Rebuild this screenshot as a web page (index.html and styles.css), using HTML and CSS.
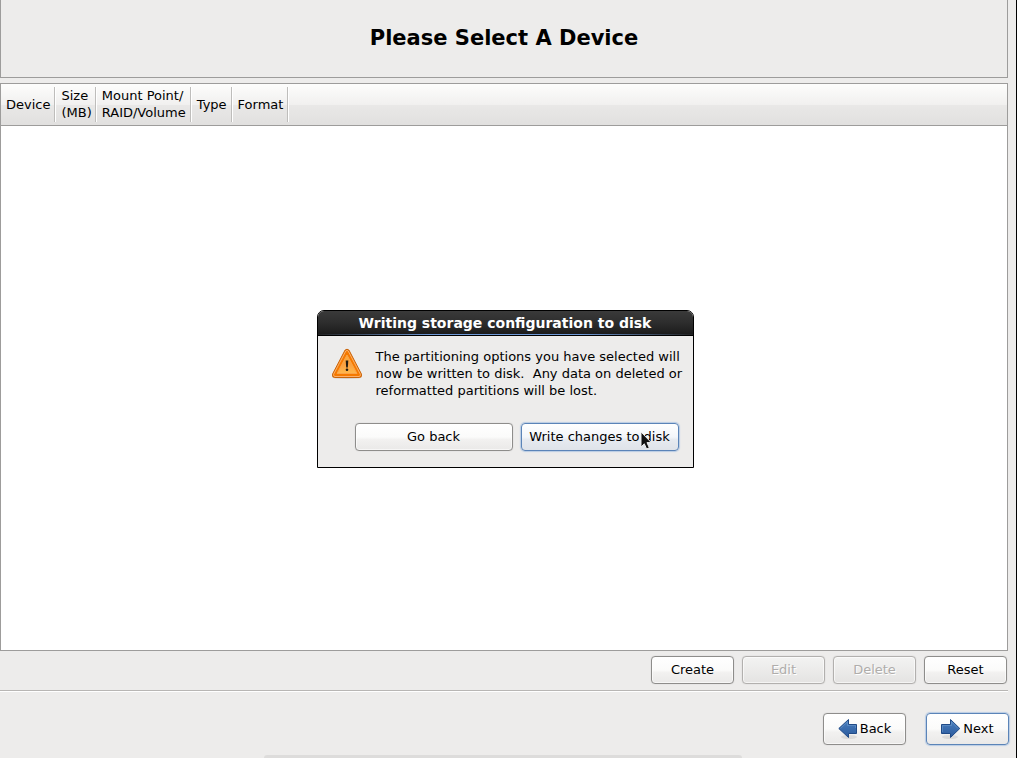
FILE: index.html
```html
<!DOCTYPE html>
<html lang="en">
<head>
<meta charset="utf-8">
<title>Please Select A Device</title>
<link rel="stylesheet" href="styles.css">
</head>
<body>
<div class="screen">
  <main class="content">
    <header class="banner"><h1>Please Select A Device</h1></header>
    <section class="device-list">
      <table class="devices">
        <thead>
          <tr>
            <th scope="col"><span>Device</span></th>
            <th scope="col"><span>Size<br>(MB)</span></th>
            <th scope="col"><span>Mount Point/<br>RAID/Volume</span></th>
            <th scope="col"><span>Type</span></th>
            <th scope="col"><span>Format</span></th>
            <td class="filler"></td>
          </tr>
        </thead>
        <tbody></tbody>
      </table>
    </section>
    <div class="actions">
      <button class="btn" type="button">Create</button>
      <button class="btn" type="button" disabled>Edit</button>
      <button class="btn" type="button" disabled>Delete</button>
      <button class="btn" type="button">Reset</button>
    </div>
  </main>
  <nav class="steps">
    <button class="btn step" type="button">
      <svg class="arrow" viewBox="0 0 20 22" aria-hidden="true"><defs><linearGradient id="blue" x1="0" y1="0" x2="0" y2="1"><stop offset="0" stop-color="#4a80c0"/><stop offset="1" stop-color="#2c5a9c"/></linearGradient></defs><ellipse cx="11" cy="20" rx="8" ry="2" fill="#000" opacity=".08"/><path d="M.8 11.500 10.500 2.500V7.500H18.500V16.500H10.500V20.500Z" fill="url(#blue)" stroke="#204a87"/><path d="M2.500 11.500 9.500 4.800V8.500H17.500V11" fill="none" stroke="#729fcf" stroke-opacity=".5"/></svg>
      <span>Back</span>
    </button>
    <button class="btn step focus" type="button">
      <svg class="arrow" viewBox="0 0 20 22" aria-hidden="true"><ellipse cx="9" cy="20" rx="8" ry="2" fill="#000" opacity=".08"/><path d="M18.800 11.500 9.500 2.500V7.500H.5V16.500H9.500V20.500Z" fill="url(#blue)" stroke="#204a87"/><path d="M1.500 15V8.500H10.500V4.800L17 11.500" fill="none" stroke="#729fcf" stroke-opacity=".5"/></svg>
      <span>Next</span>
    </button>
  </nav>
  <div class="shelf"></div>
  <section class="dialog" role="dialog" aria-labelledby="dialog-title">
    <h2 class="dialog-title" id="dialog-title">Writing storage configuration to disk</h2>
    <div class="dialog-body">
      <div class="message">
        <svg class="warning" viewBox="0 0 32 32" aria-hidden="true"><defs><linearGradient id="amber" x1="0" y1="0" x2="0" y2="1"><stop offset="0" stop-color="#fcaf3e"/><stop offset=".5" stop-color="#f9a040"/><stop offset="1" stop-color="#ffb84d"/></linearGradient></defs><ellipse cx="16" cy="29.500" rx="15" ry="1.500" fill="#000" opacity=".12"/><path d="M14 2.200Q16 .2 18 2.200L30.400 26Q31.300 29.200 28.500 29.500H3.500Q.7 29.200 1.600 26Z" fill="#f57900" stroke="#c8640c"/><path d="M14.800 3Q16 1.800 17.200 3L29.400 26.300Q29.700 28.300 28 28.500H4Q2.300 28.300 2.600 26.300Z" fill="none" stroke="#fcb06a"/><path d="M16 7 26 25.500H6Z" fill="url(#amber)" stroke="#fba348" stroke-linejoin="round"/><path d="M14.700 12.500H17.300L16.800 19.500H15.200Z" fill="#201a10"/><circle cx="16" cy="21.700" r="1.300" fill="#201a10"/></svg>
        <p class="text">The partitioning options you have selected will<br>now be written to disk.&nbsp; Any data on deleted or<br>reformatted partitions will be lost.</p>
      </div>
      <div class="dialog-actions">
        <button class="btn" type="button">Go back</button>
        <button class="btn focus hot" type="button">Write changes to disk
          <svg class="pointer" viewBox="0 0 12 19" aria-hidden="true"><path d="M1 1V16L4.300 12.800 6.600 18 9.300 16.800 7 11.600H11.300Z" fill="#111" stroke="#eee" stroke-width="1"/></svg>
        </button>
      </div>
    </div>
  </section>
</div>
</body>
</html>
```
FILE: styles.css
```css
* { box-sizing: border-box; }

body {
  margin: 0;
  background: #edeceb;
  color: #000;
  font: 13px/17px "DejaVu Sans", sans-serif;
}

.screen {
  position: relative;
  display: flex;
  flex-direction: column;
  min-height: 100vh;
  overflow: hidden;
  border-right: 1px solid #000;
}

.content {
  flex: 1;
  display: flex;
  flex-direction: column;
  margin-right: 8px;
  border-bottom: 1px solid #b8b6b4;
  box-shadow: 0 1px #fff;
}

.banner {
  padding: 25px 0 26px;
  border: 1px solid #9d9c9b;
  border-top: 0;
  text-align: center;
}

.banner h1 {
  margin: 0;
  font: bold 21px/26px "DejaVu Sans", sans-serif;
}

.device-list {
  flex: 1;
  margin-top: 5px;
  border: 1px solid #9d9c9b;
  background: #fff;
}

.devices {
  width: 100%;
  border-collapse: collapse;
}

.devices thead {
  background: linear-gradient(#fdfdfc, #f1f0ef 50%, #e9e8e7 51%, #e1e0df);
  border-bottom: 1px solid #9d9c9b;
}

.devices th {
  padding: 3px 0;
  font-weight: normal;
  text-align: left;
  white-space: nowrap;
}

.devices th span {
  display: flex;
  align-items: center;
  height: 35px;
  padding: 0 4px 1px 6px;
  border-right: 1px solid #bebdbb;
  box-shadow: 1px 0 #fff;
}

.devices th:first-child span { padding-left: 5px; }

.devices th:nth-child(2) span { padding-right: 3px; }

.filler { width: 100%; }

.btn {
  height: 28px;
  padding: 0 0 2px;
  border: 1px solid #8e8d8b;
  border-radius: 4px;
  background: linear-gradient(#fff, #fbfbfa 50%, #f2f1f0 60%, #eae9e8);
  box-shadow: inset 0 0 0 1px rgba(255, 255, 255, .6), 0 0 1px #bbb;
  color: #000;
  font: inherit;
}

.btn:disabled {
  border-color: #b2b0ae;
  background: linear-gradient(#f3f3f2, #e4e3e2);
  color: #afadab;
  text-shadow: 1px 1px #fff;
}

.btn.focus {
  border-color: #5b84b8;
  box-shadow: 0 0 1px 1px #b9cce4;
}

.btn.hot {
  background: linear-gradient(#fff, #f3f6fa 50%, #e6eaf0 60%, #dfe3e9);
}

.actions {
  display: flex;
  justify-content: flex-end;
  gap: 8px;
  padding: 5px 1px 6px;
}

.actions .btn { width: 83px; }

.steps {
  display: flex;
  justify-content: flex-end;
  gap: 20px;
  padding: 22px 7px 13px;
}

.step {
  display: flex;
  align-items: center;
  justify-content: center;
  gap: 2px;
  width: 83px;
  height: 32px;
}

.arrow {
  width: 20px;
  height: 22px;
}

.shelf {
  position: absolute;
  bottom: 0;
  left: 26%;
  right: 27%;
  height: 3px;
  border-radius: 6px 6px 0 0;
  background: #dddcdb;
}

.dialog {
  position: absolute;
  top: 310px;
  left: 0;
  right: 6px;
  width: 377px;
  margin: 0 auto;
  border: 1px solid #000;
  border-radius: 7px 7px 0 0;
  background: #edeceb;
}

.dialog-title {
  margin: 0;
  padding: 4px 0 3px;
  border-bottom: 1px solid #000;
  border-radius: 6px 6px 0 0;
  background: linear-gradient(90deg, #222, #6f9ad8 30% 70%, #222) bottom / 100% 1px no-repeat padding-box, linear-gradient(#3a3a3a, #2d2d2d 50%, #1a1a1a);
  color: #fff;
  font: bold 14px/17px "DejaVu Sans", sans-serif;
  text-align: center;
}

.dialog-body { padding: 12px 14px 16px 13px; }

.message {
  display: flex;
  gap: 13px;
}

.warning {
  flex: none;
  width: 32px;
  height: 32px;
}

.text {
  margin: 0;
  white-space: nowrap;
}

.dialog-actions {
  display: flex;
  justify-content: flex-end;
  gap: 8px;
  margin-top: 24px;
}

.dialog-actions .btn { width: 158px; }

.hot { position: relative; }

.pointer {
  position: absolute;
  top: 7px;
  left: 118px;
  width: 12px;
  height: 19px;
}
```
